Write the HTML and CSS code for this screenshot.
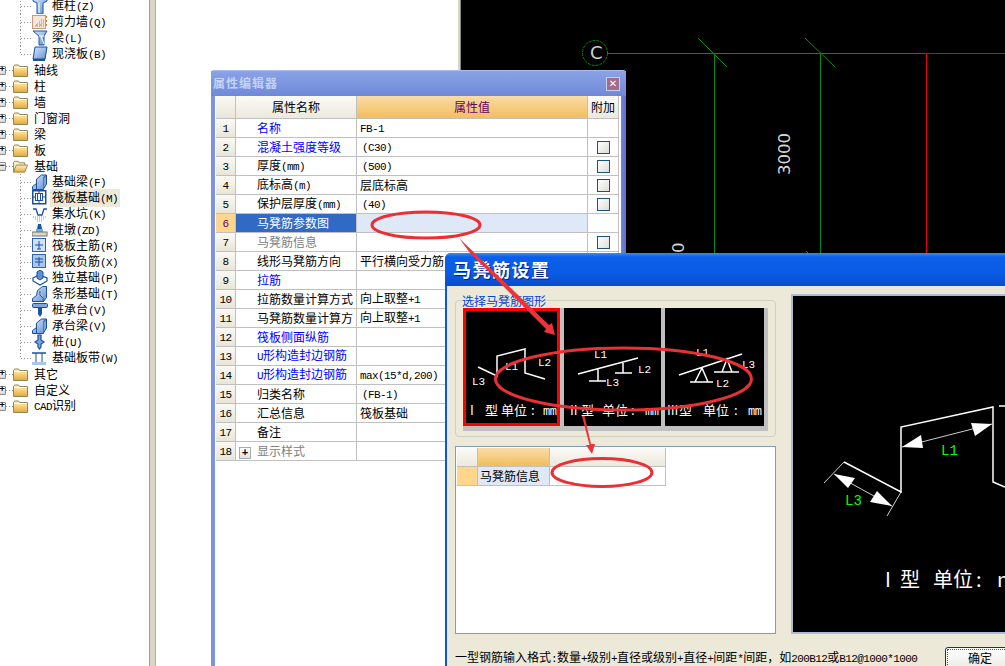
FILE: index.html
```html
<!DOCTYPE html>
<html lang="zh-CN">
<head>
<meta charset="utf-8">
<title>马凳筋设置</title>
<link rel="stylesheet" href="styles.css">
</head>
<body>
<svg class="defs" width="0" height="0" aria-hidden="true">
  <defs>
    <linearGradient id="fold" x1="0" y1="0" x2="0" y2="1"><stop offset="0" stop-color="#fff3c4"/><stop offset="1" stop-color="#e8a92c"/></linearGradient>
    <linearGradient id="blu" x1="0" y1="0" x2="1" y2="1"><stop offset="0" stop-color="#dce9fb"/><stop offset="1" stop-color="#5c8fd6"/></linearGradient>
    <symbol id="i-folder" viewBox="0 0 15 13"><path d="M.5 2.5 1.5 1h4l1 1.5h8v10H.5z" fill="url(#fold)" stroke="#8c8468"/><path d="M1 3.5h13" stroke="#fff"/></symbol>
    <symbol id="i-open" viewBox="0 0 16 13"><path d="M.5 12.500V2L1.500 1h4l1 1.500h6v2.500" fill="#fbeeb8" stroke="#8c8468"/><path d="M.5 12.500 3.500 5h12l-3 7.500z" fill="url(#fold)" stroke="#8c8468"/></symbol>
    <symbol id="i-col" viewBox="0 0 16 16"><path d="M1 0h14v3l-4 2v11H5V5L1 3z" fill="url(#blu)" stroke="#1a56a8"/><path d="M7 5v10" stroke="#fff"/></symbol>
    <symbol id="i-wall" viewBox="0 0 16 16"><rect x=".5" y="1.500" width="13" height="13" fill="#f6e6da" stroke="#c99a7a"/><path d="M3 12h9M5 10h7M7 8h5M9 6h3M4 11h2M8 11h2" stroke="#8a8a8a" stroke-dasharray="1 1"/><path d="M14.500 2v12" stroke="#e07a20" stroke-dasharray="2 2"/></symbol>
    <symbol id="i-beam" viewBox="0 0 16 16"><path d="M1 1h14l-3 5v9H7V6z" fill="url(#blu)" stroke="#1a56a8"/><path d="M7 6l5 0M9 6l3 8" stroke="#fff"/></symbol>
    <symbol id="i-slab" viewBox="0 0 16 16"><path d="M3 1h12l-2 12H1z" fill="url(#blu)" stroke="#1a4f9e"/><path d="M1 13v2h12l2-13-2 11z" fill="#1a4f9e"/></symbol>
    <symbol id="i-fbeam" viewBox="0 0 16 16"><path d="M.5 15.500v-3l4-3V5l5-4h5l-3 3v11.500z" fill="url(#blu)" stroke="#1a4f9e"/><path d="M4.500 9v6.500M11.500 4l3-3v9l-3 5" fill="#7ea5de" stroke="#1a4f9e"/></symbol>
    <symbol id="i-raft" viewBox="0 0 16 16"><rect x=".75" y=".75" width="13" height="13" fill="#fff" stroke="#1a4f9e" stroke-width="1.500"/><rect x="3.500" y="3.500" width="7" height="7" fill="none" stroke="#1a4f9e"/><path d="M7 1v2M7 11v2M1 7h2M11 7h2M5.500 3.500v7M8.500 3.500v7" stroke="#1a4f9e"/></symbol>
    <symbol id="i-pit" viewBox="0 0 16 16"><path d="M1 3h3l2 6h4l2-6h3" fill="none" stroke="#1a4f9e" stroke-width="1.300"/><path d="M1 11h14M3 13h10M5 15h6" stroke="#6f9bd9" stroke-dasharray="1 1"/></symbol>
    <symbol id="i-pier" viewBox="0 0 16 16"><path d="M6 2h3l1 5H5z" fill="#1a56a8"/><path d="M4 7h7v3H4z" fill="#7ea5de"/><rect x="0" y="10" width="15" height="4" fill="#d8d8d2" stroke="#707070"/></symbol>
    <symbol id="i-main" viewBox="0 0 16 16"><rect x=".5" y=".5" width="13" height="13" fill="#cfe0f7" stroke="#2a62b4"/><path d="M7 3v8M3 7h8M5 11h4" stroke="#1a4f9e"/></symbol>
    <symbol id="i-neg" viewBox="0 0 16 16"><rect x=".5" y=".5" width="13" height="13" fill="#a9c6ee" stroke="#2a62b4"/><path d="M3 5h8M3 8h8M7 3v9" stroke="#1a4f9e"/></symbol>
    <symbol id="i-indep" viewBox="0 0 16 16"><path d="M1 8l6-3 8 3v3l-7 4-7-4z" fill="#fff" stroke="#1a4f9e" stroke-width="1.200"/><path d="M5 2l3-2 3 2v6l-3 2-3-2z" fill="#5c8fd6" stroke="#1a4f9e"/></symbol>
    <symbol id="i-strip" viewBox="0 0 16 16"><path d="M.5 15.500v-3l4-3 1-5 5-4h4v11l-3 4z" fill="url(#blu)" stroke="#1a4f9e"/><path d="M.5 15.500h11M11 15.500V12L8 9V5" fill="#fff" stroke="#1a4f9e"/></symbol>
    <symbol id="i-cap" viewBox="0 0 16 16"><rect x=".5" y="1.500" width="15" height="4" rx="1" fill="#7ea5de" stroke="#1a4f9e"/><path d="M6 6h4v6l-2 3-2-3z" fill="#1a56a8"/></symbol>
    <symbol id="i-pile" viewBox="0 0 16 16"><path d="M6 1h3v5l3 2-3 2v3l-1.500 2L6 13v-3L3 8l3-2z" fill="#7ea5de" stroke="#1a4f9e" stroke-width="1.200"/></symbol>
    <symbol id="i-band" viewBox="0 0 16 16"><path d="M0 3h14" stroke="#1a4f9e" stroke-width="1.500"/><path d="M4 3v9M10 3v9" stroke="#1a4f9e"/><rect x="0" y="12" width="14" height="3" fill="#a9c6ee"/></symbol>
  </defs>
</svg>

<div class="desk">
  <nav class="tree">
    <div class="kid"><i class="hl"></i><svg class="ic"><use href="#i-col"/></svg><span>框柱<b class="l">(Z)</b></span></div>
    <div class="kid"><i class="hl"></i><svg class="ic"><use href="#i-wall"/></svg><span>剪力墙<b class="l">(Q)</b></span></div>
    <div class="kid"><i class="hl"></i><svg class="ic"><use href="#i-beam"/></svg><span>梁<b class="l">(L)</b></span></div>
    <div class="kid last"><i class="hl"></i><svg class="ic"><use href="#i-slab"/></svg><span>现浇板<b class="l">(B)</b></span></div>
    <div class="fold"><i class="tog">+</i><i class="hl2"></i><svg class="fo"><use href="#i-folder"/></svg><span>轴线</span></div>
    <div class="fold"><i class="tog">+</i><i class="hl2"></i><svg class="fo"><use href="#i-folder"/></svg><span>柱</span></div>
    <div class="fold"><i class="tog">+</i><i class="hl2"></i><svg class="fo"><use href="#i-folder"/></svg><span>墙</span></div>
    <div class="fold"><i class="tog">+</i><i class="hl2"></i><svg class="fo"><use href="#i-folder"/></svg><span>门窗洞</span></div>
    <div class="fold"><i class="tog">+</i><i class="hl2"></i><svg class="fo"><use href="#i-folder"/></svg><span>梁</span></div>
    <div class="fold"><i class="tog">+</i><i class="hl2"></i><svg class="fo"><use href="#i-folder"/></svg><span>板</span></div>
    <div class="fold"><i class="tog">−</i><i class="hl2"></i><svg class="fo"><use href="#i-open"/></svg><span>基础</span></div>
    <div class="kid"><i class="hl"></i><svg class="ic"><use href="#i-fbeam"/></svg><span>基础梁<b class="l">(F)</b></span></div>
    <div class="kid"><i class="hl"></i><svg class="ic"><use href="#i-raft"/></svg><span class="sel">筏板基础<b class="l">(M)</b></span></div>
    <div class="kid"><i class="hl"></i><svg class="ic"><use href="#i-pit"/></svg><span>集水坑<b class="l">(K)</b></span></div>
    <div class="kid"><i class="hl"></i><svg class="ic"><use href="#i-pier"/></svg><span>柱墩<b class="l">(ZD)</b></span></div>
    <div class="kid"><i class="hl"></i><svg class="ic"><use href="#i-main"/></svg><span>筏板主筋<b class="l">(R)</b></span></div>
    <div class="kid"><i class="hl"></i><svg class="ic"><use href="#i-neg"/></svg><span>筏板负筋<b class="l">(X)</b></span></div>
    <div class="kid"><i class="hl"></i><svg class="ic"><use href="#i-indep"/></svg><span>独立基础<b class="l">(P)</b></span></div>
    <div class="kid"><i class="hl"></i><svg class="ic"><use href="#i-strip"/></svg><span>条形基础<b class="l">(T)</b></span></div>
    <div class="kid"><i class="hl"></i><svg class="ic"><use href="#i-cap"/></svg><span>桩承台<b class="l">(V)</b></span></div>
    <div class="kid"><i class="hl"></i><svg class="ic"><use href="#i-fbeam"/></svg><span>承台梁<b class="l">(V)</b></span></div>
    <div class="kid"><i class="hl"></i><svg class="ic"><use href="#i-pile"/></svg><span>桩<b class="l">(U)</b></span></div>
    <div class="kid last"><i class="hl"></i><svg class="ic"><use href="#i-band"/></svg><span>基础板带<b class="l">(W)</b></span></div>
    <div class="fold"><i class="tog">+</i><i class="hl2"></i><svg class="fo"><use href="#i-folder"/></svg><span>其它</span></div>
    <div class="fold"><i class="tog">+</i><i class="hl2"></i><svg class="fo"><use href="#i-folder"/></svg><span>自定义</span></div>
    <div class="fold"><i class="tog">+</i><i class="hl2"></i><svg class="fo"><use href="#i-folder"/></svg><span><b class="l">CAD</b>识别</span></div>
  </nav>
  <div class="split"></div>
  <div class="list"></div>
  <div class="split2"></div>
  <svg class="cad" viewBox="461 0 544 666">
    <g class="cad-g">
      <circle cx="595" cy="53" r="12.500" stroke-dasharray="3 1"/>
      <path d="M607 53.500H926M714.500 53V260M820.500 53V260M698 38l29 29M805 38l30 29M806 251l6 6"/>
    </g>
    <path class="cad-r" d="M1005 53.500H926.500V260"/>
    <text class="cad-c" x="590" y="59">C</text>
    <text class="cad-n" transform="translate(790 175) rotate(-90)">3000</text>
    <text class="cad-n" transform="translate(684 253) rotate(-90)">0</text>
  </svg>
</div>

<section class="prop">
  <header class="prop-title"><span>属性编辑器</span><i class="close">✕</i></header>
  <div class="prop-body">
    <table class="pt">
      <colgroup><col class="c0"><col class="c1"><col class="c2"><col class="c3"></colgroup>
      <tr class="hd"><th class="n"></th><th>属性名称</th><th class="v">属性值</th><th>附加</th></tr>
      <tr><td class="n"><b class="l">1</b></td><td class="nm blue">名称</td><td class="va"><b class="l">FB-1</b></td><td></td></tr>
      <tr><td class="n"><b class="l">2</b></td><td class="nm blue">混凝土强度等级</td><td class="va p"><b class="l">(C30)</b></td><td class="ck"><i></i></td></tr>
      <tr><td class="n"><b class="l">3</b></td><td class="nm">厚度<b class="l">(mm)</b></td><td class="va p"><b class="l">(500)</b></td><td class="ck"><i></i></td></tr>
      <tr><td class="n"><b class="l">4</b></td><td class="nm">底标高<b class="l">(m)</b></td><td class="va">层底标高</td><td class="ck"><i></i></td></tr>
      <tr><td class="n"><b class="l">5</b></td><td class="nm">保护层厚度<b class="l">(mm)</b></td><td class="va p"><b class="l">(40)</b></td><td class="ck"><i></i></td></tr>
      <tr class="cur"><td class="n"><b class="l">6</b></td><td class="nm">马凳筋参数图</td><td class="va"></td><td></td></tr>
      <tr><td class="n"><b class="l">7</b></td><td class="nm gray">马凳筋信息</td><td class="va"></td><td class="ck"><i></i></td></tr>
      <tr><td class="n"><b class="l">8</b></td><td class="nm">线形马凳筋方向</td><td class="va">平行横向受力筋</td><td></td></tr>
      <tr><td class="n"><b class="l">9</b></td><td class="nm blue">拉筋</td><td class="va"></td><td></td></tr>
      <tr><td class="n"><b class="l">10</b></td><td class="nm">拉筋数量计算方式</td><td class="va">向上取整<b class="l">+1</b></td><td></td></tr>
      <tr><td class="n"><b class="l">11</b></td><td class="nm">马凳筋数量计算方</td><td class="va">向上取整<b class="l">+1</b></td><td></td></tr>
      <tr><td class="n"><b class="l">12</b></td><td class="nm blue">筏板侧面纵筋</td><td class="va"></td><td></td></tr>
      <tr><td class="n"><b class="l">13</b></td><td class="nm blue"><b class="l">U</b>形构造封边钢筋</td><td class="va"></td><td></td></tr>
      <tr><td class="n"><b class="l">14</b></td><td class="nm blue"><b class="l">U</b>形构造封边钢筋</td><td class="va"><b class="l">max(15*d,200)</b></td><td></td></tr>
      <tr><td class="n"><b class="l">15</b></td><td class="nm">归类名称</td><td class="va p"><b class="l">(FB-1)</b></td><td></td></tr>
      <tr><td class="n"><b class="l">16</b></td><td class="nm">汇总信息</td><td class="va">筏板基础</td><td></td></tr>
      <tr><td class="n"><b class="l">17</b></td><td class="nm">备注</td><td class="va"></td><td></td></tr>
      <tr><td class="n"><b class="l">18</b></td><td class="nm gray exp"><i class="plus">+</i>显示样式</td><td class="va"></td><td></td></tr>
    </table>
  </div>
</section>

<section class="dlg">
  <header class="dlg-title">马凳筋设置</header>
  <div class="dlg-body">
    <div class="dlg-main">
      <div class="left">
        <div class="group">
          <span class="legend">选择马凳筋图形</span>
          <div class="strip">
            <svg class="thumb on" viewBox="466 311 91 112">
              <path class="wl" d="M478 367l19 9V356l28-7v24l20 6"/>
              <text class="t" x="505" y="370">L1</text><text class="t" x="538" y="366">L2</text><text class="t" x="472" y="385">L3</text>
              <text class="u" x="470" y="415">I</text><text class="u" x="485" y="415">型</text><text class="u" x="501" y="415">单位</text><text class="u" x="531" y="415">:</text><text class="mm" x="543" y="415">mm</text>
            </svg>
            <svg class="thumb" viewBox="564 308 97 118">
              <path class="wl" d="M578 374l60-16M598 369v12M589 381h17M623 363v10M615 373h17"/>
              <text class="t" x="594" y="358">L1</text><text class="t" x="638" y="373">L2</text><text class="t" x="606" y="386">L3</text>
              <text class="u" x="570" y="415">II</text><text class="u" x="581" y="415">型</text><text class="u" x="602" y="415">单位</text><text class="u" x="631" y="415">:</text><text class="mm" x="645" y="415">mm</text>
            </svg>
            <svg class="thumb" viewBox="665 308 99 118">
              <path class="wl" d="M679 375l63-21M702 368l-7 14h13zM690 382h23M727 359l-5 13h10zM714 372h25"/>
              <text class="t" x="696" y="356">L1</text><text class="t" x="742" y="368">L3</text><text class="t" x="716" y="387">L2</text>
              <text class="u" x="667" y="415">III</text><text class="u" x="679" y="415">型</text><text class="u" x="703" y="415">单位</text><text class="u" x="734" y="415">:</text><text class="mm" x="748" y="415">mm</text>
            </svg>
          </div>
        </div>
        <div class="gridbox">
          <table class="gt">
            <colgroup><col class="g0"><col class="g1"><col class="g2"></colgroup>
            <tr class="ghd"><th></th><th class="v"></th><th></th></tr>
            <tr><td class="gn"></td><td class="gl">马凳筋信息</td><td></td></tr>
          </table>
        </div>
      </div>
      <svg class="preview" viewBox="793 296 296 336">
        <path class="bl" d="M844 462l57 30V427l92-20v75l12 5M999 406h6"/>
        <path class="tl" d="M844 462l-20 21M901 492l-14 24M834 474l58 32M902 447l90-23"/>
        <path class="ah" d="M834 474l21 4-7 10zM892 506l-22-4 7-11zM902 447l19-12 2 13zM992 424l-21-1 4 13z"/>
        <text class="g" x="941" y="455">L1</text><text class="g" x="845" y="505">L3</text>
        <text class="big" x="885" y="587">I</text><text class="big" x="900" y="587">型</text><text class="big" x="933" y="587">单位</text><text class="big" x="976" y="587">:</text><text class="big" x="997" y="587">mm</text>
      </svg>
    </div>
    <footer class="foot">
      <p class="status">一型钢筋输入格式<b class="l">:</b>数量<b class="l">+</b>级别<b class="l">+</b>直径或级别<b class="l">+</b>直径<b class="l">+</b>间距<b class="l">*</b>间距，如<b class="l">200B12</b>或<b class="l">B12@1000*1000</b></p>
      <button class="ok">确定</button>
    </footer>
  </div>
</section>

<svg class="marks" viewBox="0 0 1005 666">
  <ellipse cx="426" cy="225" rx="54" ry="13"/>
  <ellipse cx="623.500" cy="379" rx="128" ry="31"/>
  <ellipse cx="602" cy="472.500" rx="50" ry="14"/>
  <path class="ar" d="M459 238 549 325l3-2 3 12-11-3 2-3-76-76z"/>
  <path class="ar" d="M582 416h2.500l6.500 28h4l-3 10-6-9h3.500z"/>
</svg>
</body>
</html>
```
FILE: styles.css
```css
* { box-sizing: border-box; }
html, body { margin: 0; height: 100%; overflow: hidden; }
body {
  position: relative;
  width: 1005px;
  height: 666px;
  font: 12px/16px "Noto Sans CJK SC", "Liberation Sans", sans-serif;
  color: #000;
  background: #fff;
}
.defs { position: absolute; }
.l {
  font: 11px/16px "Liberation Mono", monospace;
  letter-spacing: -.6px;
}
.desk { display: flex; height: 666px; }
.tree { width: 149px; flex: none; margin-top: -2px; overflow: hidden; }
.kid, .fold { display: flex; align-items: center; height: 16px; white-space: nowrap; }
.kid {
  padding-left: 21px;
  background: repeating-linear-gradient(#909090 0 1px, transparent 1px 3px) 20px 0 / 1px 100% no-repeat;
}
.kid.last { background-size: 1px 50%; }
.hl, .hl2 {
  display: block;
  height: 1px;
  background: repeating-linear-gradient(90deg, #909090 0 1px, transparent 1px 3px);
}
.hl { width: 11px; }
.hl2 { width: 7px; }
.ic { width: 16px; height: 16px; flex: none; margin-right: 4px; }
.fo { width: 15px; height: 13px; flex: none; margin-right: 6px; }
.tog {
  display: block;
  width: 10px;
  height: 9px;
  margin-left: -4px;
  flex: none;
  border: 1px solid #8a8a8a;
  border-radius: 1px;
  background: linear-gradient(#fff, #d8d8cc);
  font: bold 9px/7px "Liberation Mono", monospace;
  text-align: right;
  color: #000;
}
.sel { background: #ece9d8; padding: 0 2px; margin-left: -2px; line-height: 16px; }
.split { width: 7px; flex: none; background: #d8d6c4; border-left: 1px solid #9a9a90; border-right: 1px solid #b0b0b0; }
.list { width: 302px; flex: none; background: #fff; }
.split2 { width: 3px; flex: none; background: #d8d6c4; border-right: 1px solid #888; }
.cad { flex: 1; height: 666px; background: #000; display: block; min-width: 0; }
.cad-g { fill: none; stroke: #0a8a0a; }
.cad-r { fill: none; stroke: #f00000; }
.cad-c { font: 18px "DejaVu Sans", sans-serif; fill: #d0d0d0; }
.cad-n { font: 16.5px "DejaVu Sans", sans-serif; fill: #d8d8d8; }

.prop {
  position: absolute;
  left: 211px;
  top: 70px;
  width: 415px;
  height: 596px;
  display: flex;
  flex-direction: column;
  background: linear-gradient(90deg, #7d93dc, #7d93dc 98%, #5d6fd0);
  border-top: 1px solid #a9bbef;
  padding: 0 5px 0 4px;
  border-radius: 3px 3px 0 0;
}
.prop-title {
  height: 25px;
  flex: none;
  margin: 0 -5px 0 -4px;
  padding: 4px 6px 0 2px;
  display: flex;
  justify-content: space-between;
  background: linear-gradient(#8aa3e6, #6e89d9);
  font-weight: bold;
  color: #c4d2f6;
  letter-spacing: 1px;
}
.close {
  width: 14px;
  height: 14px;
  margin-top: 2px;
  background: #a56b8c;
  border: 1px solid #c5d0ee;
  color: #fff;
  font: bold 10px/12px "DejaVu Sans", sans-serif;
  text-align: center;
  letter-spacing: 0;
}
.prop-body { flex: 1; background: #fff; padding: 0 0 0 1px; }
.pt, .gt { border-collapse: separate; border-spacing: 0; table-layout: fixed; }
.pt { width: 403px; }
.c0 { width: 20px; }
.c1 { width: 121px; }
.c2 { width: 231px; }
.c3 { width: 31px; }
.pt th, .pt td, .gt th, .gt td {
  padding: 0;
  border-right: 1px solid #c0c0c0;
  border-bottom: 1px solid #c0c0c0;
  font-weight: normal;
  white-space: nowrap;
  overflow: hidden;
}
.pt tr { height: 19px; }
.pt .hd { height: 23px; }
.pt th { background: linear-gradient(#fbfaf6, #ece9dc); text-align: center; }
.pt th.v, .gt th.v { background: linear-gradient(#f9dca6, #f2be5e); color: #660066; }
.pt .n { background: linear-gradient(#faf9f4, #e9e6d8); text-align: center; }
.nm { padding-left: 21px !important; }
.va { padding-left: 3px !important; }
.va.p { padding-left: 5px !important; }
.blue { color: #0000ff; }
.gray { color: #808080; }
.cur .n { background: #ffd68c; color: #660066; }
.cur .nm { background: #316ac5; color: #fff; }
.cur .va { background: #dfe8f6; }
.ck { text-align: center; }
.ck i {
  display: block;
  width: 13px;
  height: 13px;
  margin: 0 auto;
  border: 1px solid #1c5180;
  background: linear-gradient(135deg, #fff, #dcdcd7);
}
.exp { padding-left: 3px !important; }
.plus {
  display: inline-block;
  width: 12px;
  height: 12px;
  margin-right: 6px;
  border: 1px solid #aaa;
  background: linear-gradient(#fff, #e4e4dc);
  color: #000;
  font: bold 11px/10px "Liberation Mono", monospace;
  text-align: center;
  vertical-align: middle;
}

.dlg {
  position: absolute;
  left: 445px;
  top: 253px;
  width: 620px;
  height: 413px;
  display: flex;
  flex-direction: column;
  background: #0a5ad8;
  padding-left: 2px;
  border-radius: 6px 0 0 0;
  overflow: hidden;
}
.dlg-title {
  height: 33px;
  flex: none;
  margin-left: -2px;
  padding: 3px 0 0 8px;
  background: linear-gradient(#3a8cf6 0, #0a5fea 12%, #0a5ce6 60%, #0a4ccb 100%);
  color: #fff;
  font-size: 18px;
  line-height: 26px;
  font-weight: bold;
  letter-spacing: 1.500px;
  text-shadow: 1px 1px 0 #00248a;
}
.dlg-body { flex: 1; background: #ece9d8; display: flex; flex-direction: column; padding-left: 8px; }
.dlg-main { display: flex; gap: 15px; height: 348px; padding-top: 8px; }
.left { width: 321px; flex: none; padding-top: 6px; display: flex; flex-direction: column; gap: 9px; }
.group {
  position: relative;
  height: 137px;
  padding: 7px 0 0 7px;
  border: 1px solid #d0d0bf;
  border-radius: 4px;
}
.legend { position: absolute; left: 6px; top: -8px; color: #0046d5; }
.strip {
  display: flex;
  gap: 4px;
  width: 305px;
  height: 123px;
  padding: 0 4px 5px 0;
  background: #c0c0c0;
}
.thumb { width: 97px; height: 118px; background: #000; display: block; }
.strip .thumb:last-child { width: 99px; }
.thumb.on { border: 3px solid #f00; }
.wl { fill: none; stroke: #fff; stroke-width: 1.500; }
.t { font: 11px "Liberation Mono", monospace; fill: #fff; }
.u { font: 13px "Noto Sans CJK SC", sans-serif; fill: #fff; }
.mm { font: 12px "Liberation Mono", monospace; letter-spacing: -.4px; fill: #fff; }
.gridbox { height: 188px; background: #fff; border: 1px solid #7f9db9; padding: 1px; }
.gt { width: 209px; }
.g0 { width: 21px; }
.g1 { width: 72px; }
.g2 { width: 116px; }
.gt tr { height: 19px; }
.gt th { background: linear-gradient(#fbfaf6, #ece9dc); }
.gt .gn { background: #ffd68c; }
.gt .gl { background: #dfe8f6; padding-left: 2px; }
.preview {
  width: 300px;
  height: 340px;
  flex: none;
  background: #000;
  border: 2px solid #a9bdd6;
}
.bl { fill: none; stroke: #fff; stroke-width: 1.500; }
.tl { fill: none; stroke: #fff; stroke-width: .8; }
.ah { fill: #fff; }
.g { font: 14px "Liberation Mono", monospace; fill: #0f0; }
.big { font: 20px "Noto Sans CJK SC", sans-serif; fill: #fff; }
.foot { flex: 1; display: flex; align-items: flex-start; padding-top: 13px; }
.status { width: 490px; flex: none; margin: 2px 0 0; white-space: nowrap; }
.ok {
  width: 70px;
  height: 22px;
  padding: 0;
  border: 1px solid #003c74;
  border-radius: 3px;
  outline: 1px dotted #555;
  outline-offset: -3px;
  background: linear-gradient(#fff, #ecebe5);
  font: 12px/16px "Noto Sans CJK SC", sans-serif;
  color: #000;
}

.marks { position: absolute; left: 0; top: 0; width: 1005px; height: 666px; pointer-events: none; }
.marks ellipse { fill: none; stroke: #ea3035; stroke-width: 3; }
.ar { fill: #ee3338; }
```
